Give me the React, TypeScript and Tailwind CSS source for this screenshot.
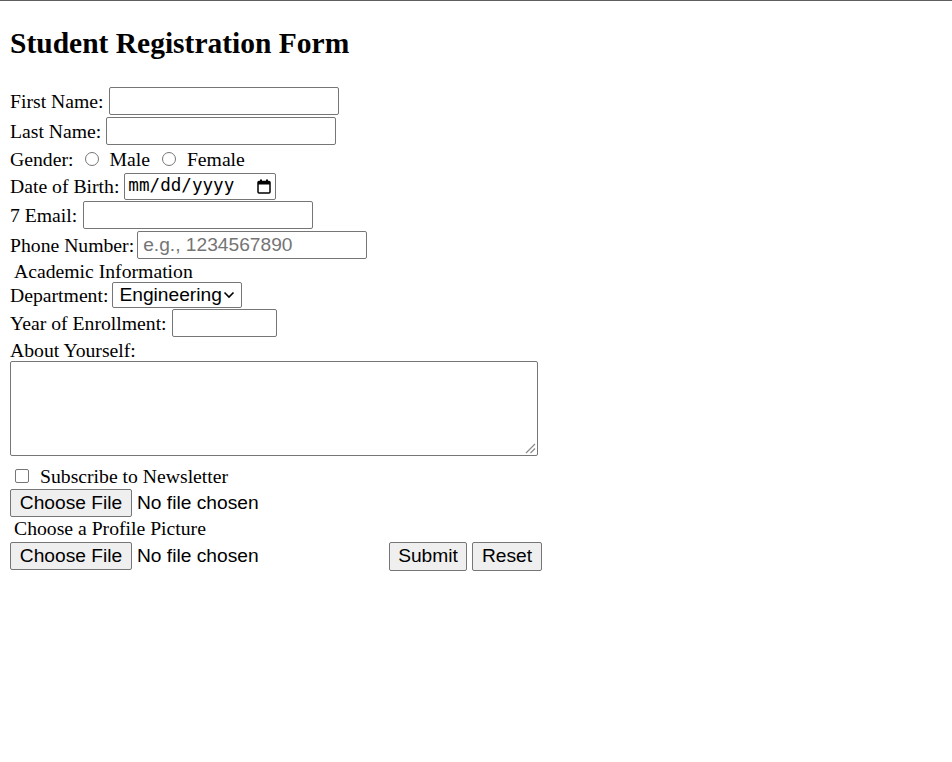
import React from "react";

const sans = "font-['Liberation_Sans',Arial,sans-serif]";

function TextBox({ className = "", placeholder }: { className?: string; placeholder?: string }) {
  return (
    <div
      className={`${sans} box-border h-[28px] border border-[#767676] rounded-[2px] bg-white flex items-center px-[5px] text-[19.2px] leading-none text-[#757575] ${className}`}
    >
      {placeholder ?? ""}
    </div>
  );
}

function Radio() {
  return <span className="inline-block box-border w-[14px] h-[14px] rounded-full border border-[#767676] bg-white" />;
}

function FileBtn() {
  return (
    <div className={`${sans} flex items-center text-[19.2px]`}>
      <div className="box-border h-[28px] w-[122px] flex items-center justify-center bg-[#efefef] border border-[#767676] rounded-[2px] text-black">
        Choose File
      </div>
      <span className="ml-[5px] text-black">No file chosen</span>
    </div>
  );
}

function CalendarIcon() {
  return (
    <svg width="14" height="15" viewBox="0 0 14 15" className="block">
      <rect x="3" y="0.5" width="2" height="3" fill="#000" />
      <rect x="9" y="0.5" width="2" height="3" fill="#000" />
      <rect x="1" y="2.5" width="12" height="11.5" rx="1" fill="none" stroke="#000" strokeWidth="1.5" />
      <rect x="1" y="2.5" width="12" height="3" fill="#000" />
    </svg>
  );
}

export default function App() {
  return (
    <div className="min-h-screen bg-white text-black">
      <div className="h-px bg-[#5f5f5f]" />
      <div className="px-[10px] font-['Liberation_Serif','Times_New_Roman',serif] text-[19.7px]">
        <h2 className="mt-[26px] text-[29.5px] font-bold leading-[33px]">Student Registration Form</h2>

        <div className="mt-[26px] leading-[22px]">
          <div className="flex items-center h-[30px]">
            <span>First Name:</span>
            <TextBox className="ml-[5px] w-[230px]" />
          </div>
          <div className="flex items-center h-[29px]">
            <span>Last Name:</span>
            <TextBox className="ml-[5px] w-[230px]" />
          </div>
          <div className="flex items-center h-[27px]">
            <span>Gender:</span>
            <span className="ml-[12px] flex items-center"><Radio /></span>
            <span className="ml-[10px]">Male</span>
            <span className="ml-[12px] flex items-center"><Radio /></span>
            <span className="ml-[11px]">Female</span>
          </div>
          <div className="flex items-center h-[28px]">
            <span>Date of Birth:</span>
            <div
              className={`${sans} ml-[5px] box-border h-[27px] w-[152px] border border-[#767676] rounded-[2px] flex items-center pl-[3px] pr-[4px] leading-none`}
            >
              <span className="font-['DejaVu_Sans_Mono',monospace] text-[17.6px]">mm/dd/yyyy</span>
              <span className="ml-auto"><CalendarIcon /></span>
            </div>
          </div>
          <div className="flex items-center h-[30px]">
            <span>7 Email:</span>
            <TextBox className="ml-[6px] w-[230px]" />
          </div>
          <div className="flex items-center h-[29px]">
            <span>Phone Number:</span>
            <TextBox className="ml-[3px] w-[230px]" placeholder="e.g., 1234567890" />
          </div>
          <div className="flex items-center h-[23px]">
            <span className="ml-[4px]">Academic Information</span>
          </div>
          <div className="flex items-center h-[26px]">
            <span>Department:</span>
            <div
              className={`${sans} ml-[4px] box-border h-[26px] w-[130px] border border-[#767676] rounded-[2px] flex items-center pl-[6px] pr-[6px] text-[19.2px] leading-none`}
            >
              <span>Engineering</span>
              <svg width="12" height="8" viewBox="0 0 12 8" className="ml-auto">
                <path d="M1.5 1.5 L6 6 L10.5 1.5" fill="none" stroke="#000" strokeWidth="1.6" />
              </svg>
            </div>
          </div>
          <div className="flex items-center h-[30px]">
            <span>Year of Enrollment:</span>
            <TextBox className="ml-[5px] w-[105px]" />
          </div>
          <div className="flex items-center h-[23px]">
            <span>About Yourself:</span>
          </div>
          <div className="relative box-border w-[528px] h-[95px] border border-[#767676] rounded-[2px]">
            <svg width="12" height="12" viewBox="0 0 12 12" className="absolute right-[1px] bottom-[1px]">
              <path d="M11 2 L2 11 M11 6.5 L6.5 11" stroke="#8a8a8a" strokeWidth="1.2" />
            </svg>
          </div>
          <div className="flex items-center h-[32px] pt-[7px]">
            <span className="ml-[5px] inline-block box-border w-[14px] h-[14px] rounded-[2px] border border-[#767676] bg-white" />
            <span className="ml-[11px]">Subscribe to Newsletter</span>
          </div>
          <div className="flex items-center h-[30px]">
            <FileBtn />
          </div>
          <div className="flex items-center h-[23px] pb-[3px]">
            <span className="ml-[4px]">Choose a Profile Picture</span>
          </div>
          <div className="flex items-center h-[30px]">
            <div className="w-[379px]">
              <FileBtn />
            </div>
            <div className={`${sans} flex items-center gap-[5px] text-[19.2px]`}>
              <div className="box-border h-[29px] w-[78px] flex items-center justify-center bg-[#efefef] border border-[#767676] rounded-[2px]">
                Submit
              </div>
              <div className="box-border h-[29px] w-[70px] flex items-center justify-center bg-[#efefef] border border-[#767676] rounded-[2px]">
                Reset
              </div>
            </div>
          </div>
        </div>
      </div>
    </div>
  );
}
